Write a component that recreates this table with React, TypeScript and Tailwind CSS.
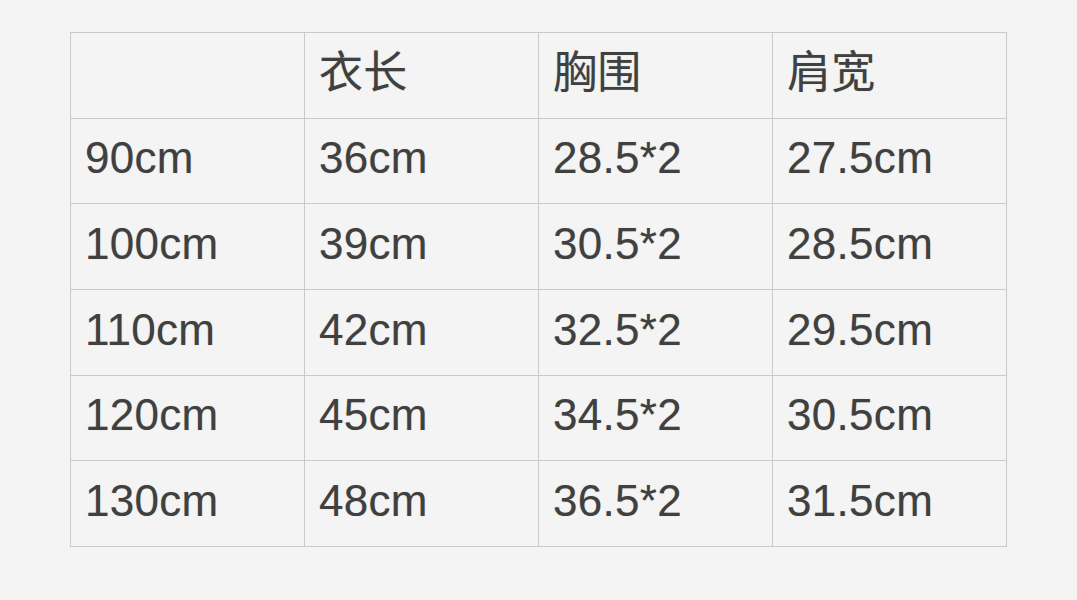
const header = ["", "衣长", "胸围", "肩宽"];

const rows = [
  ["90cm", "36cm", "28.5*2", "27.5cm"],
  ["100cm", "39cm", "30.5*2", "28.5cm"],
  ["110cm", "42cm", "32.5*2", "29.5cm"],
  ["120cm", "45cm", "34.5*2", "30.5cm"],
  ["130cm", "48cm", "36.5*2", "31.5cm"],
];

export default function App() {
  const cells = [header, ...rows];
  return (
    <div className="h-[600px] w-[1077px] bg-[#f4f4f4] pl-[70px] pt-[32px] [font-family:'Liberation_Sans','Noto_Sans_CJK_SC',sans-serif]">
      <div className="grid h-[515px] w-[937px] grid-cols-[repeat(4,234px)] grid-rows-[repeat(6,1fr)] border-l border-t border-[#c9c9c9]">
        {cells.map((row, r) =>
          row.map((text, c) => (
            <div
              key={`${r}-${c}`}
              className="flex items-center border-b border-r border-[#c9c9c9] pb-[5px] pl-[14px] text-[44px] leading-none tracking-[0.3px] text-[#404040] [text-shadow:0_0_1px_rgba(0,0,0,0.25)]"
            >
              {text}
            </div>
          ))
        )}
      </div>
    </div>
  );
}
